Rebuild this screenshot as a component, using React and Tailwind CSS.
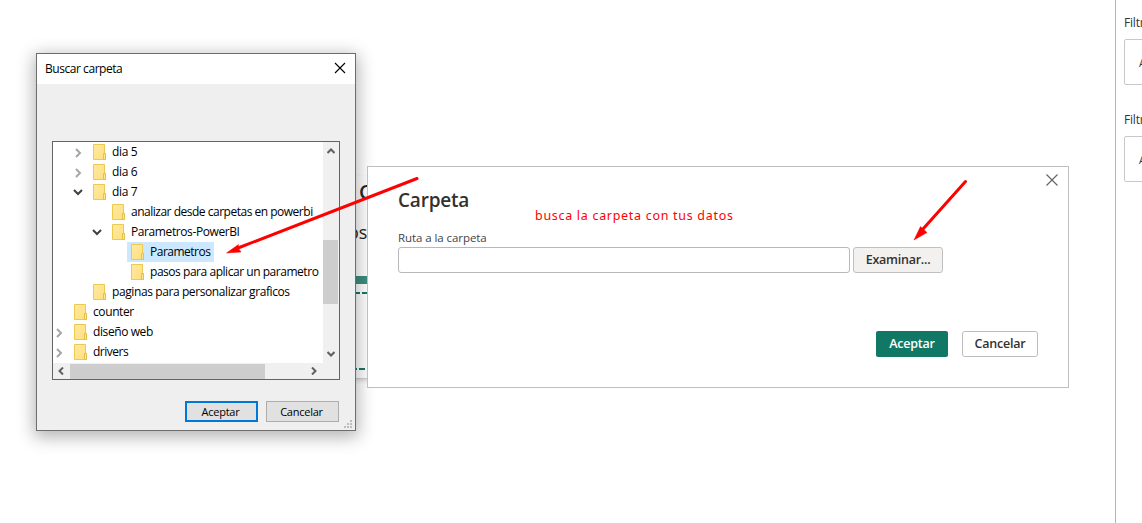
const rows = [
  { label: 'dia 5', pad: 'pl-[20px]', state: 'closed', spacing: 'tracking-[-0.35px]' },
  { label: 'dia 6', pad: 'pl-[20px]', state: 'closed', spacing: 'tracking-[-0.35px]' },
  { label: 'dia 7', pad: 'pl-[20px]', state: 'open', spacing: 'tracking-[-0.35px]' },
  { label: 'analizar desde carpetas en powerbi', pad: 'pl-[39px]', spacing: 'tracking-[-0.49px]' },
  { label: 'Parametros-PowerBI', pad: 'pl-[39px]', state: 'open', spacing: 'tracking-[-0.4px]' },
  { label: 'Parametros', pad: 'pl-[58px]', selected: true, spacing: 'tracking-[-0.5px]' },
  { label: 'pasos para aplicar un parametro', pad: 'pl-[58px]', spacing: 'tracking-[-0.46px]' },
  { label: 'paginas para personalizar graficos', pad: 'pl-[20px]', spacing: 'tracking-[-0.4px]' },
  { label: 'counter', pad: 'pl-[1px]', spacing: 'tracking-[-0.4px]' },
  { label: 'diseño web', pad: 'pl-[1px]', state: 'closed', spacing: 'tracking-[-0.4px]' },
  { label: 'drivers', pad: 'pl-[1px]', state: 'closed', spacing: 'tracking-[-0.5px]' },
]

function Chevron({ className, d, w, h, stroke = '#606060' }) {
  return (
    <svg className={className} width={w} height={h} viewBox={`0 0 ${w} ${h}`} fill="none">
      <path d={d} stroke={stroke} strokeWidth="2" />
    </svg>
  )
}

function Folder() {
  return (
    <svg className="shrink-0" width="13" height="16" viewBox="0 0 13 16">
      <defs>
        <linearGradient id="folder" x1="0" y1="0" x2="1" y2="1">
          <stop offset="0" stopColor="#ffe9a2" />
          <stop offset="1" stopColor="#ffdf7d" />
        </linearGradient>
      </defs>
      <path d="M.5.5h11v9h1v6H.5z" fill="url(#folder)" stroke="#ecc94f" />
      <path d="M10.500 15.500v-6h2v6z" fill="#ffe68f" stroke="#e6bf45" />
    </svg>
  )
}

function TreeRow({ label, pad, state, selected, spacing }) {
  return (
    <div className={`flex h-5 shrink-0 items-center ${pad}`}>
      <div className="flex w-[20px] shrink-0 items-center">
        {state === 'closed' && <Chevron className="ml-[2px] mt-px" w={7} h={10} d="M1 1l4 4-4 4" stroke="#a6a6a6" />}
        {state === 'open' && <Chevron className="mt-px" w={10} h={7} d="M1 1l4 4 4-4" stroke="#404040" />}
      </div>
      <div className={`-ml-[4px] flex h-5 items-center pl-[4px] pr-[4px] ${selected ? 'bg-[#cce8ff]' : ''}`}>
        <Folder />
        <span className={`ml-[6px] whitespace-nowrap text-[12px] leading-5 ${spacing}`}>{label}</span>
      </div>
    </div>
  )
}

function FolderBrowser() {
  return (
    <section className="absolute left-[36px] top-[53px] flex h-[378px] w-[320px] flex-col border border-[#6d6d6d] bg-[#efefef] text-black shadow-[0_4px_16px_2px_rgba(0,0,0,0.3)]">
      <header className="flex h-[30px] items-center justify-between bg-white pl-2 pr-[9px]">
        <h2 className="text-[12px] tracking-[-0.45px]">Buscar carpeta</h2>
        <svg width="12" height="12" viewBox="0 0 12 12" className="-mt-[2px]">
          <path d="M1 1l10 10M11 1L1 11" stroke="#000" strokeWidth="1.100" />
        </svg>
      </header>
      <div className="ml-[15px] mt-[57px] flex h-[239px] w-[288px] flex-col border border-[#646464] bg-[#f0f0f0]">
        <div className="flex h-[221px]">
          <div className="flex w-[270px] flex-col overflow-hidden bg-white">
            {rows.map((r) => <TreeRow key={r.label} {...r} />)}
          </div>
          <div className="flex w-4 flex-col items-center">
            <Chevron className="mb-[86px] mr-px mt-[6px]" w={8} h={6} d="M.5 5L4 1.500 7.500 5" />
            <div className="mr-px h-16 w-[15px] bg-[#cdcdcd]" />
            <Chevron className="mr-px mt-[47px]" w={8} h={6} d="M.5 1L4 4.500 7.500 1" />
          </div>
        </div>
        <div className="flex h-4 items-center">
          <Chevron className="ml-[5px] mr-[6px]" w={6} h={8} d="M5 .5L1.500 4 5 7.500" />
          <div className="h-[15px] w-[195px] bg-[#cdcdcd]" />
          <Chevron className="ml-[46px]" w={6} h={8} d="M1 .5L4.500 4 1 7.500" />
        </div>
      </div>
      <footer className="mt-[21px] flex gap-2 pl-[148px] text-[11px] tracking-[-0.25px]">
        <button className="h-[21px] w-[73px] border-2 border-[#0078d7] bg-[#e1e1e1] pr-[2px] leading-[17px]">Aceptar</button>
        <button className="h-[21px] w-[73px] border border-[#adadad] bg-[#e1e1e1] pr-[2px] leading-[19px]">Cancelar</button>
      </footer>
      <svg className="absolute bottom-[2px] right-[3px]" width="8" height="8" viewBox="0 0 8 8" fill="#bdbdbd">
        <path d="M6 0h2v2H6zM6 3h2v2H6zM3 3h2v2H3zM6 6h2v2H6zM3 6h2v2H3zM0 6h2v2H0z" />
      </svg>
    </section>
  )
}

function PathDialog() {
  return (
    <section className="absolute left-[367px] top-[166px] flex h-[222px] w-[702px] flex-col border border-[#bfbfbf] bg-white pl-[30px] text-[#323130]">
      <div className="flex h-[63px] items-start">
        <h1 className="mt-[19px] w-[137px] text-[19px] font-semibold leading-7 tracking-[-0.2px]">Carpeta</h1>
        <p className="mt-[39px] font-['Noto_Sans',sans-serif] text-[12.500px] leading-5 tracking-[0.7px] text-[#ff0000]">busca la carpeta con tus datos</p>
        <svg className="ml-auto mr-[10px] mt-[7px]" width="12" height="12" viewBox="0 0 12 12">
          <path d="M.5.5l11 11M11.500.5l-11 11" stroke="#666" strokeWidth="1.200" />
        </svg>
      </div>
      <label className="h-[17px] text-[11.500px] leading-[15px] tracking-[-0.07px] text-[#444]">Ruta a la carpeta</label>
      <div className="flex gap-[3px]">
        <input className="h-[26px] w-[452px] rounded-[3px] border border-[#b8b8b8] bg-white" />
        <button className="h-[26px] w-[90px] rounded-[3px] border border-[#c0c0c0] bg-[#f2f1f0] text-[12.500px] font-semibold leading-6 tracking-[-0.25px]">Examinar...</button>
      </div>
      <div className="mt-[58px] flex gap-[14px] pl-[478px] text-[12.500px] font-semibold tracking-[-0.2px]">
        <button className="h-[26px] w-[72px] rounded-[2px] bg-[#117865] leading-[26px] text-white">Aceptar</button>
        <button className="h-[26px] w-[76px] rounded-[3px] border border-[#bdbdbd] leading-6">Cancelar</button>
      </div>
    </section>
  )
}

function FilterPane() {
  return (
    <aside className="flex h-full w-[27px] flex-col overflow-hidden border-l border-[#b3b3b3] pl-2 pt-[14px] text-[12px] tracking-[-0.2px] text-[#333]">
      <p className="h-[25px] whitespace-nowrap leading-[18px]">Filtros de esta página</p>
      <div className="h-[46px] w-40 shrink-0 rounded-[2px] border border-[#c8c8c8] pl-[14px] text-[10.500px] leading-[46px]">Agregar campos</div>
      <p className="mt-[26px] h-[25px] whitespace-nowrap leading-[18px]">Filtros de todas</p>
      <div className="h-[46px] w-40 shrink-0 rounded-[2px] border border-[#c8c8c8] pl-[14px] text-[10.500px] leading-[46px]">Agregar campos</div>
    </aside>
  )
}

function CanvasCard() {
  return (
    <div className="absolute left-[340px] top-[176px] flex h-[203px] w-[30px] flex-col overflow-hidden border-b border-[#cfcfcf] text-[#252423] shadow-[0_2px_4px_rgba(0,0,0,0.15)]">
      <span className="h-[44px] pl-[19px] text-[20px] font-semibold leading-[32px]">C</span>
      <span className="h-[56px] pl-[8px] text-[18px] leading-[25px]">os</span>
      <div className="h-2 shrink-0 bg-[#3b8e7e]" />
      <svg className="mt-[8px] shrink-0" width="30" height="2" viewBox="0 0 30 2">
        <path d="M15 1h5M22 1h6" stroke="#117865" strokeWidth="2" />
      </svg>
      <svg className="mt-[74px] shrink-0" width="30" height="2" viewBox="0 0 30 2">
        <path d="M12 1h5M19 1h6M27 1h3" stroke="#117865" strokeWidth="2" />
      </svg>
    </div>
  )
}

export default function App() {
  return (
    <main className="relative flex h-[523px] w-[1142px] justify-end overflow-hidden bg-white font-['Open_Sans','Noto_Sans',sans-serif]">
      <FilterPane />
      <CanvasCard />
      <FolderBrowser />
      <PathDialog />
      <svg className="pointer-events-none absolute left-0 top-0" width="1142" height="523" viewBox="0 0 1142 523" fill="#ff0000" stroke="#ff0000">
        <path d="M417 178.500L238 248M965.500 181.500L923 229" fill="none" strokeWidth="3" strokeLinecap="round" />
        <path d="M226.500 253L238.500 244.500 238 248 241 252z" strokeWidth="0.500" />
        <path d="M914 240L920.500 226.500 923 229 927 232.500z" strokeWidth="0.500" />
      </svg>
    </main>
  )
}
